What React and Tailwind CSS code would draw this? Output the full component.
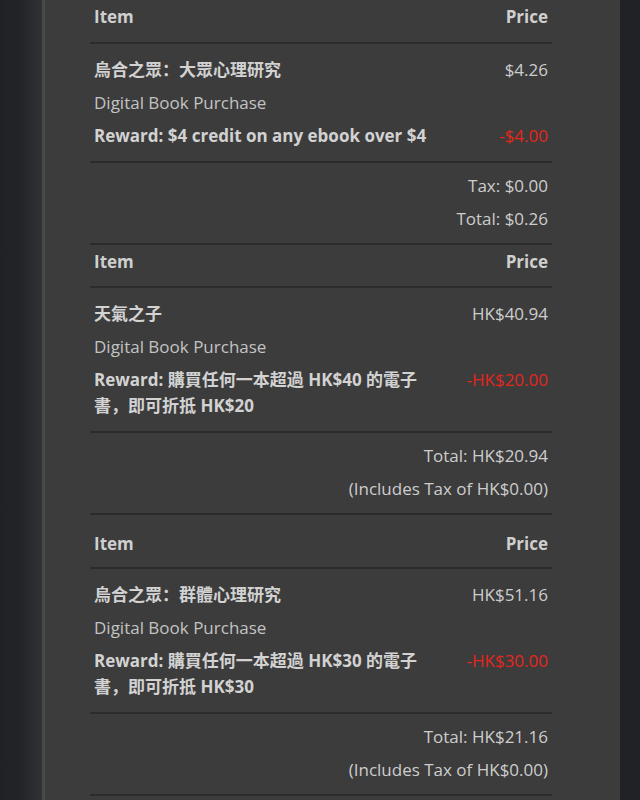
import React from "react";

const red = "text-[#e5261c]";

function Header({ top = "pt-[4px]", bottom = "pb-[12px]" }) {
  return (
    <div className={`flex justify-between px-[4px] ${top} ${bottom} border-b-2 border-[#2b2b2b] font-bold text-[#cfcfcf]`}>
      <span>Item</span>
      <span>Price</span>
    </div>
  );
}

function Items({ title, price, reward, discount }) {
  return (
    <div className="flex flex-col gap-[7px] px-[4px] pt-[13px] pb-[12px] border-b-2 border-[#2b2b2b]">
      <div className="flex justify-between">
        <span className="font-bold text-[#d2d2d2]">{title}</span>
        <span className="text-[#cdcdcd]">{price}</span>
      </div>
      <div className="text-[#c3c3c3]">Digital Book Purchase</div>
      <div className="flex justify-between items-start">
        <span className="font-bold text-[#d2d2d2] w-[340px]">{reward}</span>
        <span className={red}>{discount}</span>
      </div>
    </div>
  );
}

function Totals({ lines }) {
  return (
    <div className="flex flex-col items-end gap-[7px] px-[4px] pt-[10px] pb-[11px] border-b-2 border-[#2b2b2b] text-[#cdcdcd]">
      {lines.map((l) => (
        <span key={l}>{l}</span>
      ))}
    </div>
  );
}

export default function App() {
  return (
    <div className="flex h-[800px] w-[640px] overflow-hidden bg-[#202226] font-['Open_Sans','Noto_Sans_CJK_SC',sans-serif] text-[17px] leading-[26px]">
      <div className="w-[42px] bg-gradient-to-r from-[#1f2125] via-[#222428] to-[#303236]" />
      <div className="w-[3px] bg-[#47484a]" />
      <div className="w-[575px] bg-[#3c3c3c] pl-[45px]">
        <div className="w-[462px]">
          <Header />
          <Items
            title="烏合之眾：大眾心理研究"
            price="$4.26"
            reward="Reward: $4 credit on any ebook over $4"
            discount="-$4.00"
          />
          <Totals lines={["Tax: $0.00", "Total: $0.26"]} />

          <Header bottom="pb-[11px]" />
          <Items
            title="天氣之子"
            price="HK$40.94"
            reward="Reward: 購買任何一本超過 HK$40 的電子書，即可折抵 HK$20"
            discount="-HK$20.00"
          />
          <Totals lines={["Total: HK$20.94", "(Includes Tax of HK$0.00)"]} />

          <Header top="pt-[16px]" bottom="pb-[10px]" />
          <Items
            title="烏合之眾：群體心理研究"
            price="HK$51.16"
            reward="Reward: 購買任何一本超過 HK$30 的電子書，即可折抵 HK$30"
            discount="-HK$30.00"
          />
          <Totals lines={["Total: HK$21.16", "(Includes Tax of HK$0.00)"]} />
        </div>
      </div>
      <div className="flex-1 bg-[#202226]" />
    </div>
  );
}
